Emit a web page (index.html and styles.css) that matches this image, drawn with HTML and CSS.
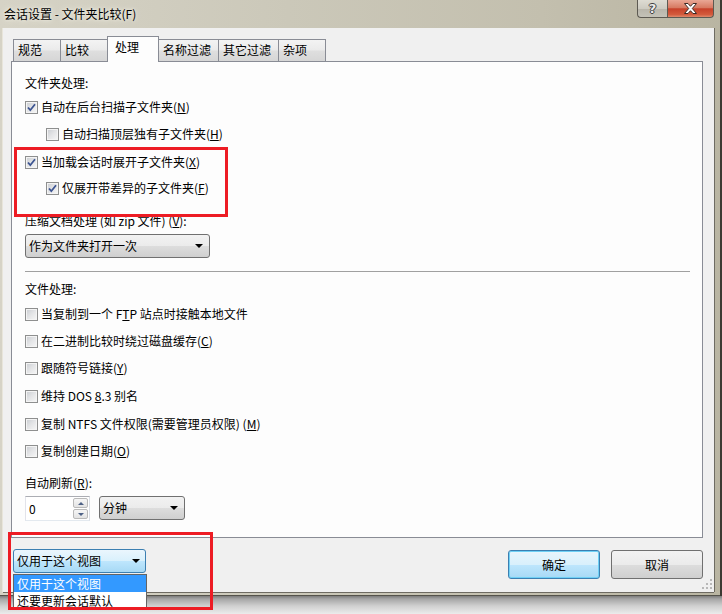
FILE: index.html
```html
<!DOCTYPE html>
<html lang="zh">
<head>
<meta charset="utf-8">
<title>会话设置 - 文件夹比较(F)</title>
<link rel="stylesheet" href="styles.css">
</head>
<body>
<div class="screen">
  <div class="window">
    <div class="titlebar">
      <span class="title">会话设置 - 文件夹比较(F)</span>
      <div class="caption">
        <div class="cap help">?</div>
        <div class="cap close">
          <svg width="13" height="11" viewBox="0 0 13 11"><path d="M0.5 0.5 H4 L6.5 3.3 L9 0.5 H12.5 L8.3 5.5 L12.5 10.5 H9 L6.5 7.7 L4 10.5 H0.5 L4.7 5.5 Z" fill="#fff" stroke="#3a2a26" stroke-width="1" stroke-linejoin="round"/></svg>
        </div>
      </div>
    </div>
    <div class="client">
      <div class="tabs">
        <div class="tab">规范</div>
        <div class="tab">比较</div>
        <div class="tab sel">处理</div>
        <div class="tab">名称过滤</div>
        <div class="tab">其它过滤</div>
        <div class="tab">杂项</div>
      </div>
      <div class="panel">
        <div class="row">文件夹处理:</div>
        <div class="row mt4"><span class="cb on"><svg width="11" height="11" viewBox="0 0 11 11"><path d="M2 5.5 L4.3 8.2 L9 2.3" fill="none" stroke="#3c5491" stroke-width="1.8"/></svg></span><span>自动在后台扫描子文件夹(<u>N</u>)</span></div>
        <div class="row mt7 ind"><span class="cb"></span><span>自动扫描顶层独有子文件夹(<u>H</u>)</span></div>
        <div class="row mt8"><span class="cb on"><svg width="11" height="11" viewBox="0 0 11 11"><path d="M2 5.5 L4.3 8.2 L9 2.3" fill="none" stroke="#3c5491" stroke-width="1.8"/></svg></span><span>当加载会话时展开子文件夹(<u>X</u>)</span></div>
        <div class="row mt6 ind"><span class="cb on"><svg width="11" height="11" viewBox="0 0 11 11"><path d="M2 5.5 L4.3 8.2 L9 2.3" fill="none" stroke="#3c5491" stroke-width="1.8"/></svg></span><span>仅展开带差异的子文件夹(<u>F</u>)</span></div>
        <div class="row mt13">压缩文档处理 (如 zip 文件) (<u>V</u>):</div>
        <div class="combo wide mt3"><span>作为文件夹打开一次</span><i class="arrow"></i></div>
        <div class="sep"></div>
        <div class="row mt7">文件处理:</div>
        <div class="row mt5"><span class="cb"></span><span>当复制到一个 F<u>T</u>P 站点时接触本地文件</span></div>
        <div class="row mt7"><span class="cb"></span><span>在二进制比较时绕过磁盘缓存(<u>C</u>)</span></div>
        <div class="row mt7"><span class="cb"></span><span>跟随符号链接(<u>Y</u>)</span></div>
        <div class="row mt8"><span class="cb"></span><span>维持 DOS <u>8</u>.3 别名</span></div>
        <div class="row mt8"><span class="cb"></span><span>复制 NTFS 文件权限(需要管理员权限) (<u>M</u>)</span></div>
        <div class="row mt7"><span class="cb"></span><span>复制创建日期(<u>O</u>)</span></div>
        <div class="row mt12">自动刷新(<u>R</u>):</div>
        <div class="refresh mt3">
          <div class="spin">
            <span class="val">0</span>
            <div class="spinbtns">
              <div class="sb"><i class="up"></i></div>
              <div class="sb"><i class="down"></i></div>
            </div>
          </div>
          <div class="combo unit"><span>分钟</span><i class="arrow"></i></div>
        </div>
      </div>
      <div class="footer">
        <div class="combowrap">
          <div class="combo focus"><span>仅用于这个视图</span><i class="arrow"></i></div>
          <div class="droplist">
            <div class="item hl">仅用于这个视图</div>
            <div class="item">还要更新会话默认</div>
          </div>
        </div>
        <div class="buttons">
          <div class="btn def">确定</div>
          <div class="btn">取消</div>
        </div>
      </div>
      <svg class="grip" width="10" height="10" viewBox="0 0 10 10">
        <g fill="#b8b8b8">
          <rect x="8" y="0" width="2" height="2"/>
          <rect x="4" y="4" width="2" height="2"/><rect x="8" y="4" width="2" height="2"/>
          <rect x="0" y="8" width="2" height="2"/><rect x="4" y="8" width="2" height="2"/><rect x="8" y="8" width="2" height="2"/>
        </g>
      </svg>
    </div>
    <div class="mark mark1"></div>
    <div class="mark mark2"></div>
  </div>
</div>
</body>
</html>
```
FILE: styles.css
```css
html, body {
  margin: 0;
  padding: 0;
}
body {
  font-family: "Noto Sans CJK SC", "Noto Sans", sans-serif;
  font-size: 12px;
  color: #000;
}
.screen {
  width: 722px;
  height: 614px;
  overflow: hidden;
  background: linear-gradient(#7c7c7c 0, #a6a6a6 3px, #d0d0d0 10px, #ececec 18px);
  background-position: 0 596px;
  background-repeat: no-repeat;
  background-size: 722px 18px;
  background-color: #dedede;
}
.window {
  position: relative;
  width: 722px;
  height: 596px;
  box-sizing: border-box;
  padding: 0 8px 4px 3px;
  display: flex;
  flex-direction: column;
  background: linear-gradient(to right, #d6d3c6 0, #cbc8b9 40%, #c3bfae 75%, #b9b5a2 100%);
  box-shadow: inset -2px 0 0 #3c3a33, inset 0 -1px 0 #55534b;
}
.titlebar {
  height: 28px;
  display: flex;
  align-items: flex-start;
  flex-shrink: 0;
}
.title {
  line-height: 28px;
  padding-left: 1px;
  color: #000;
  text-shadow: 0 0 6px #f2f0e6, 0 0 3px #f2f0e6;
}
.caption {
  margin-left: auto;
  display: flex;
}
.cap {
  height: 18px;
  box-sizing: border-box;
  border: 1px solid #5d5a52;
  border-top: none;
  display: flex;
  align-items: center;
  justify-content: center;
}
.help {
  width: 30px;
  border-radius: 0 0 0 4px;
  border-right: none;
  background: linear-gradient(#dedcd3, #cdcbc1 50%, #b8b5aa 51%, #c4c2b8);
  font-family: "DejaVu Sans", sans-serif;
  font-weight: bold;
  font-size: 13px;
  line-height: 16px;
  color: #ececec;
  text-shadow: 1px 0 #3f3f3f, -1px 0 #3f3f3f, 0 1px #3f3f3f, 0 -1px #3f3f3f;
}
.close {
  width: 47px;
  border-radius: 0 0 4px 0;
  background: linear-gradient(#e9a795, #d77a62 45%, #c7412a 52%, #d35a3c 85%, #e08a6c);
}
.client {
  position: relative;
  flex: 1;
  background: #f0f0f0;
  display: flex;
  flex-direction: column;
  box-shadow: 1px 0 0 #6e6b62, 0 1px 0 #6e6b62, -1px 0 0 #e8e5da;
}
.tabs {
  display: flex;
  align-items: flex-end;
  height: 26px;
  margin-top: 8px;
  padding-left: 10px;
  position: relative;
  z-index: 2;
}
.tab {
  box-sizing: border-box;
  height: 22px;
  min-width: 48px;
  margin-bottom: 1px;
  margin-right: -1px;
  padding: 0 7px 0 4px;
  border: 1px solid #898c95;
  border-bottom: none;
  background: linear-gradient(#f3f3f3, #ebebeb 45%, #dedede 55%, #d6d6d6);
  line-height: 20px;
  white-space: nowrap;
}
.tab.sel {
  height: 26px;
  min-width: 52px;
  margin-bottom: 0;
  padding-left: 7px;
  background: #fdfdfd;
  line-height: 20px;
  position: relative;
  z-index: 3;
}
.panel {
  box-sizing: border-box;
  height: 477px;
  margin: -1px 11px 0 8px;
  border: 1px solid #898c95;
  background: #fdfdfd;
  padding: 11px 12px 0 13px;
  display: flex;
  flex-direction: column;
  position: relative;
  z-index: 1;
}
.row {
  height: 20px;
  line-height: 20px;
  display: flex;
  align-items: center;
  white-space: nowrap;
}
.row u, .title u {
  text-decoration: underline;
  text-underline-offset: 1px;
}
.ind { padding-left: 21px; }
.mt3 { margin-top: 3px; }
.mt4 { margin-top: 4px; }
.mt5 { margin-top: 5px; }
.mt6 { margin-top: 6px; }
.mt7 { margin-top: 7px; }
.mt8 { margin-top: 8px; }
.mt12 { margin-top: 12px; }
.mt13 { margin-top: 13px; }
.cb {
  width: 13px;
  height: 13px;
  box-sizing: border-box;
  border: 1px solid #8e8f8f;
  background: linear-gradient(135deg, #c9ccd1 0, #e4e5e7 50%, #f7f7f7 100%);
  box-shadow: inset 0 0 0 1px #f4f4f4;
  margin-right: 3px;
  flex-shrink: 0;
  display: flex;
  align-items: center;
  justify-content: center;
}
.cb svg { display: block; }
.combo {
  box-sizing: border-box;
  height: 24px;
  border: 1px solid #707070;
  border-radius: 3px;
  background: linear-gradient(#f2f2f2, #ebebeb 50%, #dddddd 51%, #cfcfcf);
  display: flex;
  align-items: center;
  padding: 0 6px 0 3px;
  line-height: 20px;
  white-space: nowrap;
}
.combo span { flex: 1; }
.arrow {
  width: 0;
  height: 0;
  border-left: 4px solid transparent;
  border-right: 4px solid transparent;
  border-top: 4px solid #000;
}
.combo.wide { width: 185px; }
.sep {
  margin-top: 13px;
  border-top: 1px solid #a0a0a0;
  height: 0;
}
.refresh {
  display: flex;
  align-items: flex-start;
  gap: 9px;
}
.spin {
  box-sizing: border-box;
  width: 65px;
  height: 25px;
  border: 1px solid #abadb3;
  border-color: #abadb3 #dbdfe6 #e3e9ef #e2e3ea;
  background: #fff;
  display: flex;
  align-items: stretch;
  padding: 1px;
}
.spin .val {
  flex: 1;
  line-height: 21px;
  padding-left: 2px;
}
.spinbtns {
  width: 15px;
  display: flex;
  flex-direction: column;
  gap: 1px;
}
.sb {
  flex: 1;
  border: 1px solid #b9b9b9;
  border-radius: 2px;
  background: linear-gradient(#f6f6f6, #e3e3e3);
  display: flex;
  align-items: center;
  justify-content: center;
}
.up {
  width: 0; height: 0;
  border-left: 3px solid transparent;
  border-right: 3px solid transparent;
  border-bottom: 3px solid #4d6185;
}
.down {
  width: 0; height: 0;
  border-left: 3px solid transparent;
  border-right: 3px solid transparent;
  border-top: 3px solid #4d6185;
}
.combo.unit { width: 86px; }
.footer {
  display: flex;
  align-items: flex-start;
  padding: 11px 11px 0 10px;
}
.combowrap {
  position: relative;
}
.combo.focus {
  width: 133px;
  border-color: #3c7fb1;
  background: linear-gradient(#eaf6fd, #d9f0fc 50%, #bee6fd 51%, #a7d9f5);
  padding-left: 3px;
  padding-right: 5px;
}
.droplist {
  position: absolute;
  left: 0;
  top: 25px;
  width: 134px;
  box-sizing: border-box;
  border: 1px solid #646464;
  background: #fff;
  z-index: 5;
}
.item {
  height: 17px;
  line-height: 17px;
  padding-left: 3px;
  white-space: nowrap;
}
.item.hl {
  background: #3399ff;
  color: #fff;
}
.buttons {
  margin-left: auto;
  margin-top: 1px;
  display: flex;
  gap: 11px;
}
.btn {
  box-sizing: border-box;
  width: 92px;
  height: 29px;
  border: 1px solid #707070;
  border-radius: 3px;
  background: linear-gradient(#f2f2f2, #ebebeb 50%, #dddddd 51%, #cfcfcf);
  display: flex;
  align-items: center;
  justify-content: center;
}
.btn.def {
  border-color: #3c7fb1;
  background: linear-gradient(#e8f5fc, #d9f0fc 50%, #bee6fd 51%, #a7d9f5);
  box-shadow: inset 0 0 0 1px #6fd0f5;
}
.grip {
  position: absolute;
  right: 2px;
  bottom: 3px;
}
.mark {
  position: absolute;
  box-sizing: border-box;
  border: 3px solid #ed1c24;
  z-index: 10;
}
.mark1 {
  left: 14px;
  top: 147px;
  width: 214px;
  height: 70px;
}
.mark2 {
  left: 8px;
  top: 532px;
  width: 205px;
  height: 78px;
}
```
